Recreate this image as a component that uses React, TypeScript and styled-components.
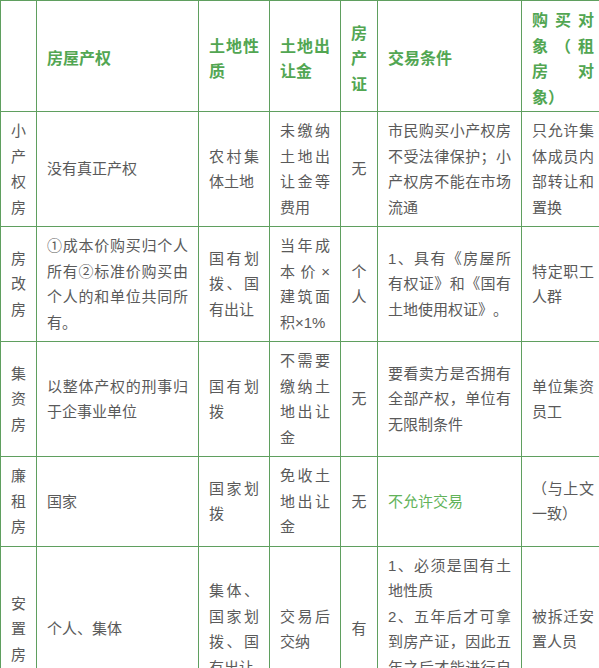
import React from "react";
import styled, { createGlobalStyle } from "styled-components";

const GlobalStyle = createGlobalStyle`
  html, body {
    margin: 0;
    padding: 0;
    background: #ffffff;
    overflow: hidden;
  }
  body {
    font-family: "Noto Sans CJK SC", "Noto Sans", sans-serif;
  }
`;

const LINE = "#5f9f5f";

const Table = styled.table`
  width: 600px;
  table-layout: fixed;
  border-collapse: collapse;
  border: 1px solid ${LINE};
`;

const Col = styled.col<{ $w: number }>`
  width: ${(p) => p.$w}px;
`;

const BaseCell = `
  border: 1px solid ${LINE};
  vertical-align: middle;
  line-height: 25.5px;
  text-spacing-trim: space-all;
  word-break: normal;
`;

const HeadCell = styled.th<{ $narrow: boolean; $last: boolean }>`
  ${BaseCell}
  padding: 6px ${(p) => (p.$last ? 6 : p.$narrow ? 8 : 10)}px 2px
    ${(p) => (p.$narrow ? 8 : 10)}px;
  font-size: 16px;
  font-weight: 700;
  color: #52a652;
  text-align: ${(p) => (p.$narrow ? "center" : "justify")};
`;

const Cell = styled.td<{ $narrow: boolean; $last: boolean }>`
  ${BaseCell}
  padding: 6px ${(p) => (p.$last ? 6 : p.$narrow ? 8 : 10)}px 6px
    ${(p) => (p.$narrow ? 8 : 10)}px;
  font-family: "Liberation Sans", "Noto Sans CJK SC", sans-serif;
  font-size: 15px;
  color: #5a5a5a;
  text-align: ${(p) => (p.$narrow ? "center" : "justify")};
`;

const GreenNote = styled.span`
  color: #62b35a;
`;

const widths = [36, 162, 71, 71, 37, 144, 79];

const headers = [
  "",
  "房屋产权",
  "土地性质",
  "土地出让金",
  "房产证",
  "交易条件",
  "购买对象（租房对象）",
];

const rows: React.ReactNode[][] = [
  [
    "小产权房",
    "没有真正产权",
    "农村集体土地",
    "未缴纳土地出让金等费用",
    "无",
    "市民购买小产权房不受法律保护；小产权房不能在市场流通",
    "只允许集体成员内部转让和置换",
  ],
  [
    "房改房",
    "①成本价购买归个人所有②标准价购买由个人的和单位共同所有。",
    "国有划拨、国有出让",
    "当年成本价×建筑面积×1%",
    "个人",
    "1、具有《房屋所有权证》和《国有土地使用权证》。",
    "特定职工人群",
  ],
  [
    "集资房",
    "以整体产权的刑事归于企事业单位",
    "国有划拨",
    "不需要缴纳土地出让金",
    "无",
    "要看卖方是否拥有全部产权，单位有无限制条件",
    "单位集资员工",
  ],
  [
    "廉租房",
    "国家",
    "国家划拨",
    "免收土地出让金",
    "无",
    <GreenNote key="g">不允许交易</GreenNote>,
    "（与上文一致）",
  ],
  [
    "安置房",
    "个人、集体",
    "集体、国家划拨、国有出让",
    "交易后交纳",
    "有",
    <React.Fragment key="f">
      1、必须是国有土地性质
      <br />
      2、五年后才可拿到房产证，因此五年之后才能进行自由买卖
    </React.Fragment>,
    "被拆迁安置人员",
  ],
];

const isNarrow = (i: number) => i === 0 || i === 4;
const isLast = (i: number) => i === widths.length - 1;

const App: React.FC = () => {
  return (
    <>
      <GlobalStyle />
      <Table>
        <colgroup>
          {widths.map((w, i) => (
            <Col key={i} $w={w} />
          ))}
        </colgroup>
        <thead>
          <tr>
            {headers.map((h, i) => (
              <HeadCell key={i} $narrow={isNarrow(i)} $last={isLast(i)}>
                {h}
              </HeadCell>
            ))}
          </tr>
        </thead>
        <tbody>
          {rows.map((row, r) => (
            <tr key={r}>
              {row.map((c, i) => (
                <Cell key={i} $narrow={isNarrow(i)} $last={isLast(i)}>
                  {c}
                </Cell>
              ))}
            </tr>
          ))}
        </tbody>
      </Table>
    </>
  );
};

export default App;
